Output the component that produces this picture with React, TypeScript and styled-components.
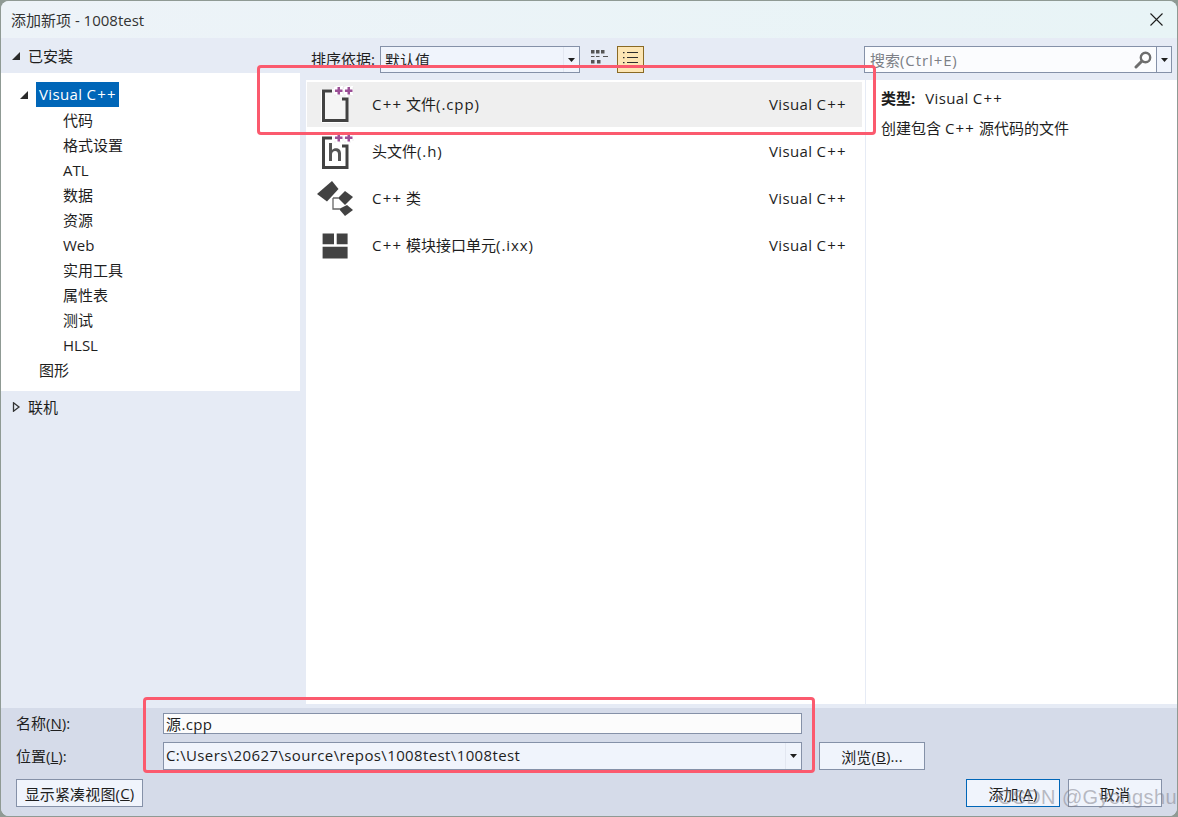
import React from "react";
import styled, { createGlobalStyle } from "styled-components";

const FONT = `"Open Sans", "Noto Sans CJK SC", sans-serif`;

const GlobalStyle = createGlobalStyle`
  html, body {
    margin: 0;
    height: 100%;
    overflow: hidden;
    background: #8f9a94;
  }
  * { box-sizing: border-box; }
`;

const TREE_ITEMS = ["代码", "格式设置", "ATL", "数据", "资源", "Web", "实用工具", "属性表", "测试", "HLSL"];

const Dialog = styled.div`
  position: relative;
  width: 1176px;
  height: 815px;
  margin: 1px 0 0 1px;
  border-radius: 8px;
  overflow: hidden;
  display: flex;
  flex-direction: column;
  background: #e6ebf5;
  color: #1e1e1e;
  font-family: ${FONT};
  font-size: 15px;
`;

const TitleBar = styled.div`
  height: 37px;
  flex: none;
  display: flex;
  align-items: center;
  justify-content: space-between;
  padding: 0 13px 0 10px;
  background: linear-gradient(90deg, #edf3f8, #e8f4f6);
  color: #333;
`;

const CloseIcon = styled.svg`
  width: 13px;
  height: 13px;
  margin-right: 1px;
`;

const Main = styled.div`
  flex: 1;
  display: flex;
  min-height: 0;
  padding-bottom: 4px;
`;

const LeftPane = styled.div`
  width: 305px;
  flex: none;
  display: flex;
  flex-direction: column;
`;

const GroupHeader = styled.div`
  height: 35px;
  display: flex;
  align-items: center;
  gap: 7px;
  padding-left: 10px;
  line-height: 34px;
`;

const OnlineHeader = styled(GroupHeader)`
  height: 31px;
`;

const Tree = styled.div`
  width: 299px;
  height: 318px;
  background: #fff;
  padding-top: 9px;
  display: flex;
  flex-direction: column;
`;

const TreeRow = styled.div<{ $indent: number }>`
  height: 25px;
  flex: none;
  display: flex;
  align-items: center;
  padding-left: ${(p) => p.$indent}px;
`;

const SelectedLabel = styled.span`
  background: #0066b8;
  color: #fff;
  height: 25px;
  width: 83px;
  line-height: 25px;
  padding-left: 3px;
  margin-left: 7px;
`;

const Arrow = styled.svg`
  width: 10px;
  height: 10px;
  flex: none;
`;

const Center = styled.div`
  flex: 1;
  min-width: 0;
  display: flex;
  flex-direction: column;
`;

const Toolbar = styled.div`
  height: 42px;
  flex: none;
  display: flex;
  align-items: flex-start;
  padding-top: 8px;
`;

const SortLabel = styled.span`
  margin-left: 5px;
  line-height: 27px;
  width: 69px;
  flex: none;
`;

const SortSelect = styled.div`
  width: 200px;
  height: 27px;
  display: flex;
  align-items: center;
  justify-content: space-between;
  border: 1px solid #8591a8;
  background: #f0f4fc;
  padding-left: 4px;
  margin-right: 6px;
  flex: none;
`;

const DropCell = styled.span`
  width: 16px;
  height: 100%;
  flex: none;
  display: flex;
  align-items: center;
  justify-content: center;
  border-left: 1px solid #e3e7f1;
`;

const ViewButton = styled.div<{ $active?: boolean }>`
  width: 27px;
  height: 27px;
  flex: none;
  display: flex;
  align-items: center;
  justify-content: center;
  margin-right: 4px;
  border: 1px solid ${(p) => (p.$active ? "#8a6a24" : "transparent")};
  background: ${(p) => (p.$active ? "#fde6b4" : "transparent")};
`;

const Columns = styled.div`
  flex: 1;
  display: flex;
  min-height: 0;
`;

const ListPane = styled.div`
  width: 560px;
  flex: none;
  background: #fff;
  border-right: 1px solid #e6ebf5;
  padding-top: 2px;
  display: flex;
  flex-direction: column;
  gap: 2px;
`;

const ListRow = styled.div<{ $selected?: boolean }>`
  height: 45px;
  flex: none;
  width: 555px;
  margin-left: 1px;
  display: flex;
  align-items: center;
  background: ${(p) => (p.$selected ? "#efefef" : "transparent")};
`;

const IconCell = styled.div`
  width: 65px;
  flex: none;
  display: flex;
  padding-left: 10px;
`;

const RowName = styled.span`
  flex: 1;
  padding-bottom: 2px;
`;

const RowType = styled.span`
  width: 93px;
  flex: none;
  padding-bottom: 2px;
`;

const InfoPane = styled.div`
  flex: 1;
  background: #fff;
  padding: 6px 15px;
`;

const InfoLine = styled.div`
  height: 30px;
  line-height: 24px;
`;

const Bold = styled.b`
  font-weight: 700;
  margin-right: 10px;
`;

const Cpp = styled.span`
  letter-spacing: 1.2px;
`;

const Latin = styled.span`
  letter-spacing: 0.9px;
`;

const Word = styled.span`
  letter-spacing: 0.35px;
`;

const SearchBox = styled.div`
  width: 308px;
  height: 27px;
  margin-left: 216px;
  display: flex;
  align-items: center;
  border: 1px solid #8591a8;
  background: #fbfcfe;
  color: #7c7f86;
  padding-left: 5px;
  flex: none;
`;

const SearchText = styled.span`
  flex: 1;
`;

const SearchDrop = styled.span`
  width: 15px;
  height: 100%;
  display: flex;
  align-items: center;
  justify-content: center;
  border-left: 1px solid #8591a8;
  background: #f0f4fc;
  margin-left: 4px;
`;

const Footer = styled.div`
  height: 108px;
  flex: none;
  background: #d5dbe9;
  padding: 5px 15px 0 15px;
  display: grid;
  grid-template-columns: 147px 639px 1fr;
  grid-template-rows: 21px 28px 28px;
  row-gap: 8px;
  align-items: center;
`;

const FieldLabel = styled.span`
  padding-bottom: 2px;
`;

const Underline = styled.span`
  text-decoration: underline;
`;

const TextField = styled.div`
  height: 21px;
  border: 1px solid #8591a8;
  background: #fcfcfc;
  display: flex;
  align-items: center;
  padding-left: 2px;
  letter-spacing: 0.38px;
`;

const PathField = styled(TextField)`
  height: 28px;
  background: #f0f4fc;
  justify-content: space-between;
`;

const PathText = styled.span`
  padding-bottom: 2px;
`;

const FooterButton = styled.div<{ $primary?: boolean }>`
  height: 28px;
  display: flex;
  align-items: center;
  justify-content: center;
  border: 1px solid ${(p) => (p.$primary ? "#0066b8" : "#8591a8")};
  background: #f0f4fc;
  letter-spacing: 0.15px;
`;

const BrowseButton = styled(FooterButton)`
  width: 106px;
  margin-left: 17px;
`;

const ButtonRow = styled.div`
  grid-column: 1 / -1;
  display: flex;
  align-items: center;
  justify-content: space-between;
  margin-top: 2px;
`;

const CompactButton = styled(FooterButton)`
  width: 127px;
`;

const DialogActions = styled.div`
  display: flex;
  gap: 8px;
`;

const ActionButton = styled(FooterButton)`
  width: 94px;
`;

const Callout = styled.div<{ $left: number; $top: number; $width: number; $height: number }>`
  position: absolute;
  left: ${(p) => p.$left}px;
  top: ${(p) => p.$top}px;
  width: ${(p) => p.$width}px;
  height: ${(p) => p.$height}px;
  border: 3px solid #fb5a6e;
  border-radius: 4px;
  pointer-events: none;
`;

const Watermark = styled.div`
  position: absolute;
  right: 0;
  top: 784px;
  font-family: "Liberation Sans", sans-serif;
  font-size: 20px;
  line-height: 24px;
  color: rgba(125, 125, 135, 0.5);
  pointer-events: none;
  letter-spacing: 0.4px;
`;

const Caret = () => (
  <svg width="7" height="4" viewBox="0 0 7 4">
    <path d="M0 0h7L3.500 4z" fill="#1e1e1e" />
  </svg>
);

const ExpandedArrow = () => (
  <Arrow viewBox="0 0 10 10">
    <path d="M9 1v8H1z" fill="#2a2a2a" />
  </Arrow>
);

const CollapsedArrow = () => (
  <Arrow viewBox="0 0 10 10">
    <path d="M2.500.800 8 5 2.500 9.200z" fill="none" stroke="#333" strokeWidth="1.300" />
  </Arrow>
);

const Plus = ({ x }: { x: number }) => (
  <g transform={`translate(${x} 1)`}>
    <path d="M-1-1h9v9H-1z" fill="#fff" stroke="#ddd" strokeWidth=".5" strokeDasharray="2 3" />
    <path d="M2.500 0h2.500v2.500H7.500v2.500H5v2.500H2.500V5H0V2.500h2.500z" fill="#9b4f96" />
  </g>
);

const ListIconSvg = styled.svg`
  width: 46px;
  height: 38px;
  flex: none;
`;

const FileIcon = ({ header, fill }: { header?: boolean; fill: string }) => (
  <ListIconSvg viewBox="0 0 46 38">
    <g transform="translate(5 0)">
      <path d="M1.500 5.500h22v29h-22z" fill={fill} stroke="#fff" strokeWidth="5" strokeLinejoin="round" />
      <path d="M1.500 5.500h22v29h-22z" fill={fill} />
      <path d="M10 5H1.500v29.500h23.500V13h-5" fill="none" stroke="#424242" strokeWidth="3" />
      {header && (
        <path d="M7 10h3v7c1-1.200 2.300-1.800 3.900-1.800 3 0 5.100 1.900 5.100 5.200V28h-3v-7c0-2-1.100-3-2.900-3-1.800 0-3.100 1.300-3.100 3.300V28H7z" fill="#555" />
      )}
    </g>
    <Plus x={18} />
    <Plus x={28} />
  </ListIconSvg>
);

const ClassIcon = () => (
  <ListIconSvg viewBox="0 0 46 38">
    <path d="M15 1l6.500 8L10 21.500 0 14z" fill="#424242" />
    <path d="M28 11l8 6-8 8-7-7z" fill="#424242" />
    <path d="M30 25l6 5-8 6-6-7z" fill="#424242" />
    <path d="M16 18v11h7M16 18h6" fill="none" stroke="#fff" strokeWidth="3" />
    <path d="M16 18v11h7M16 18h6" fill="none" stroke="#666" strokeWidth="1.300" />
  </ListIconSvg>
);

const ModuleIcon = () => (
  <ListIconSvg viewBox="0 0 46 38">
    <path d="M5.600 6.600H17v10.700H5.600zM19.700 6.600h10.900v10.700H19.700zM5.600 19.700h25v11.900h-25z" fill="#424242" />
  </ListIconSvg>
);

const GridIcon = () => (
  <svg width="18" height="22" viewBox="0 0 18 22">
    <path d="M0 1h3.500v3.500H0zM5 1h3.500v3.500H5zM10 1h3.500v3.500H10zM0 11h3.500v3.500H0zM6 11h3.500v3.500H6z" fill="#555" />
    <path d="M0 7.500h3.500M5 7.500h3.500M12 7.500h5" stroke="#555" strokeWidth="1.200" />
  </svg>
);

const ListIcon = () => (
  <svg width="15" height="17" viewBox="0 0 15 17">
    <path d="M4 1.500h11M4 6.500h11M4 11.500h11" stroke="#2e2e2e" strokeWidth="1.200" />
    <path d="M0 1h1.500v1.200H0zM0 6h1.500v1.200H0zM0 11h1.500v1.200H0z" fill="#2e2e2e" />
  </svg>
);

const SearchIcon = () => (
  <svg width="18" height="18" viewBox="0 0 18 18">
    <circle cx="11.500" cy="6.500" r="4.700" fill="#fff" stroke="#6e6e6e" strokeWidth="2.400" />
    <path d="M8 10 2 16" stroke="#6e6e6e" strokeWidth="3" strokeLinecap="round" />
  </svg>
);

const VisualCpp = () => (
  <Word>
    Visual <Cpp>C++</Cpp>
  </Word>
);

const ROWS = [
  { key: "cpp", name: <><Cpp>C++</Cpp> 文件<Latin>(.cpp)</Latin></>, icon: <FileIcon fill="#f5f5f5" />, selected: true },
  { key: "h", name: <>头文件<Latin>(.h)</Latin></>, icon: <FileIcon header fill="#fff" /> },
  { key: "class", name: <><Cpp>C++</Cpp> 类</>, icon: <ClassIcon /> },
  { key: "ixx", name: <><Cpp>C++</Cpp> 模块接口单元<Latin>(.ixx)</Latin></>, icon: <ModuleIcon /> },
];

export default function App() {
  return (
    <>
      <GlobalStyle />
      <Dialog>
        <TitleBar>
          <span>添加新项 - 1008test</span>
          <CloseIcon viewBox="0 0 13 13">
            <path d="M.5.500l12 12M12.500.500l-12 12" stroke="#1e1e1e" strokeWidth="1.100" />
          </CloseIcon>
        </TitleBar>
        <Main>
          <LeftPane>
            <GroupHeader>
              <ExpandedArrow />
              <span>已安装</span>
            </GroupHeader>
            <Tree>
              <TreeRow $indent={18}>
                <ExpandedArrow />
                <SelectedLabel><VisualCpp /></SelectedLabel>
              </TreeRow>
              {TREE_ITEMS.map((item) => (
                <TreeRow $indent={62} key={item}>{item}</TreeRow>
              ))}
              <TreeRow $indent={38}>图形</TreeRow>
            </Tree>
            <OnlineHeader>
              <CollapsedArrow />
              <span>联机</span>
            </OnlineHeader>
          </LeftPane>
          <Center>
            <Toolbar>
              <SortLabel>排序依据:</SortLabel>
              <SortSelect>
                <span>默认值</span>
                <DropCell><Caret /></DropCell>
              </SortSelect>
              <ViewButton><GridIcon /></ViewButton>
              <ViewButton $active><ListIcon /></ViewButton>
              <SearchBox>
                <SearchText>搜索<Latin>(Ctrl+E)</Latin></SearchText>
                <SearchIcon />
                <SearchDrop><Caret /></SearchDrop>
              </SearchBox>
            </Toolbar>
            <Columns>
              <ListPane>
                {ROWS.map((row) => (
                  <ListRow $selected={row.selected} key={row.key}>
                    <IconCell>{row.icon}</IconCell>
                    <RowName>{row.name}</RowName>
                    <RowType><VisualCpp /></RowType>
                  </ListRow>
                ))}
              </ListPane>
              <InfoPane>
                <InfoLine><Bold>类型:</Bold><VisualCpp /></InfoLine>
                <InfoLine>创建包含 <Cpp>C++</Cpp> 源代码的文件</InfoLine>
              </InfoPane>
            </Columns>
          </Center>
        </Main>
        <Footer>
          <FieldLabel>名称(<Underline>N</Underline>):</FieldLabel>
          <TextField>源.cpp</TextField>
          <span />
          <FieldLabel>位置(<Underline>L</Underline>):</FieldLabel>
          <PathField>
            <PathText>C:\Users\20627\source\repos\1008test\1008test</PathText>
            <DropCell><Caret /></DropCell>
          </PathField>
          <BrowseButton>浏览(<Underline>B</Underline>)...</BrowseButton>
          <ButtonRow>
            <CompactButton>显示紧凑视图(<Underline>C</Underline>)</CompactButton>
            <DialogActions>
              <ActionButton $primary>添加(<Underline>A</Underline>)</ActionButton>
              <ActionButton>取消</ActionButton>
            </DialogActions>
          </ButtonRow>
        </Footer>
        <Callout $left={256} $top={64} $width={619} $height={70} />
        <Callout $left={142} $top={696} $width={672} $height={76} />
        <Watermark>CSDN @Gyongshu</Watermark>
      </Dialog>
    </>
  );
}
